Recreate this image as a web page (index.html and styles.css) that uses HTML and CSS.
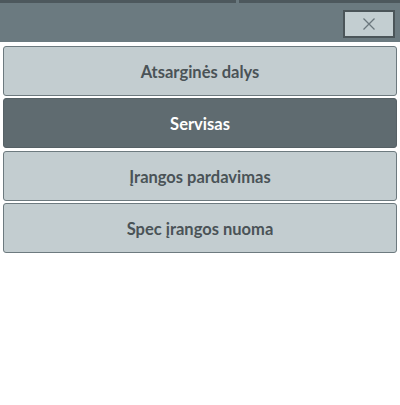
FILE: index.html
```html
<!DOCTYPE html>
<html lang="lt">
<head>
<meta charset="utf-8">
<link rel="stylesheet" href="styles.css">
</head>
<body>
<div class="header">
  <div class="topstrip"><span class="seg seg-a"></span><span class="seg seg-b"></span></div>
  <div class="bar">
    <button class="close" aria-label="Uždaryti">
      <svg width="14" height="14" viewBox="0 0 14 14"><path d="M1.5 1.5 L12.5 12.5 M12.5 1.5 L1.5 12.5" stroke="#6b777d" stroke-width="1.3" fill="none"/></svg>
    </button>
  </div>
</div>
<div class="menu">
  <div class="item">Atsarginės dalys</div>
  <div class="item active">Servisas</div>
  <div class="item">Įrangos pardavimas</div>
  <div class="item">Spec įrangos nuoma</div>
</div>
</body>
</html>
```
FILE: styles.css
```css
html, body {
  margin: 0;
  padding: 0;
  background: #ffffff;
  font-family: "Lato", "Open Sans", sans-serif;
}
.header {
  background: #6b7a80;
  height: 42px;
  display: flex;
  flex-direction: column;
}
.topstrip {
  height: 3px;
  display: flex;
  gap: 3px;
}
.seg {
  background: #4d585d;
  height: 3px;
}
.seg-a { width: 236px; }
.seg-b { flex: 1; }
.bar {
  flex: 1;
  display: flex;
  justify-content: flex-end;
  align-items: center;
  padding: 3px 5px 0 0;
}
.close {
  width: 52px;
  height: 28px;
  box-sizing: border-box;
  border: 2px solid #4b5559;
  background: #c3ced1;
  display: flex;
  align-items: center;
  justify-content: center;
  padding: 0;
}
.menu {
  display: flex;
  flex-direction: column;
  gap: 2.4px;
  padding: 4px 3px 0 3px;
}
.item {
  height: 50px;
  box-sizing: border-box;
  border: 1.5px solid #6d7a7f;
  border-radius: 3px;
  background: #c3cdd0;
  color: #4a5357;
  font-size: 16.5px;
  font-weight: 700;
  display: flex;
  align-items: center;
  justify-content: center;
  padding-top: 2px;
}
.item.active {
  background: #5f6b70;
  border-color: #566166;
  color: #ffffff;
}
```
